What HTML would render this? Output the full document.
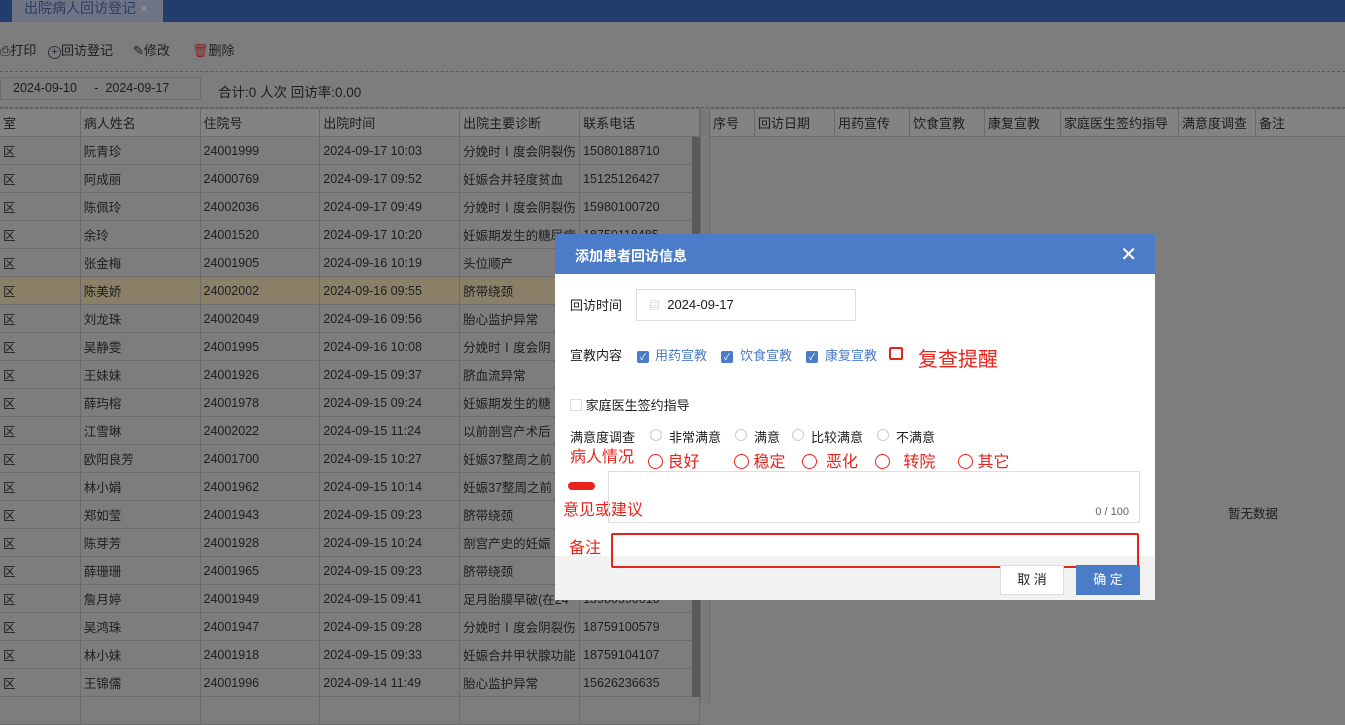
<!DOCTYPE html>
<html><head><meta charset="utf-8"><style>
*{margin:0;padding:0;box-sizing:border-box}
body{width:1345px;height:703px;overflow:hidden;background:#7d7d7d;font-family:"Liberation Sans","Noto Sans CJK SC",sans-serif;font-size:13px;color:#1e1e1e;position:relative}
.abs{position:absolute}
.top{left:0;top:0;width:1345px;height:22px;background:#213d6c}
.tab{left:12px;top:0;width:151px;height:22px;background:#6e7484;color:#2a3d66;font-size:14px;padding-left:12px;line-height:16px}
.tb{top:40px;font-size:13px}
.dash{left:0;width:1345px;border-top:1px dashed #5a5a5a}
table{border-collapse:collapse;position:absolute}
td{border:1px solid #6b6b6b;height:28px;padding-left:3px;white-space:nowrap;overflow:hidden;font-size:12.5px}
tr.h td{background:#838383;font-size:13px}
tr.sel td{background:#8a8068}
.modal{left:555px;top:234px;width:600px;height:366px;background:#fff}
.mh{height:40px;background:#4a7cc8;color:#fff;font-weight:bold;font-size:14px;padding:12px 0 0 20px}
.red{color:#e8231c}
.cb{display:inline-block;width:12px;height:12px;background:#4a7cc8;border-radius:2px;vertical-align:-1px;color:#fff;font-size:9px;line-height:12px;text-align:center}
.rad{position:absolute;top:2px;width:12px;height:12px;border:1px solid #ccc;border-radius:50%}
.rr{display:inline-block;width:15px;height:15px;border:1.5px solid #e8231c;border-radius:50%;vertical-align:-2px}
</style></head><body>
<div class="abs top"></div>
<div class="abs tab">出院病人回访登记 <span style="color:#999;font-weight:normal">×</span></div>
<div class="abs tb" style="left:0">⎙打印</div>
<div class="abs tb" style="left:48px"><span style="border:1px solid #334;border-radius:50%;display:inline-block;width:13px;height:13px;font-size:11px;line-height:11px;text-align:center">+</span>回访登记</div>
<div class="abs tb" style="left:133px">✎修改</div>
<div class="abs tb" style="left:192px"><span style="color:#8a1f1f">🗑</span>删除</div>
<div class="abs dash" style="top:71px"></div>
<div class="abs" style="left:0;top:77px;width:201px;height:23px;border:1px solid #6e6e6e"></div>
<div class="abs" style="left:13px;top:81px;font-size:12.5px">2024-09-10 &nbsp;&nbsp;&nbsp; - &nbsp;2024-09-17</div>
<div class="abs" style="left:218px;top:81px;font-size:13.5px">合计:0 人次 回访率:0.00</div>
<div class="abs dash" style="top:107px"></div>
<table style="left:-1px;top:108px;width:701px">
<colgroup><col width="81"><col width="120"><col width="120"><col width="140"><col width="120"><col width="120"></colgroup>
<tr class="h"><td>室</td><td>病人姓名</td><td>住院号</td><td>出院时间</td><td>出院主要诊断</td><td>联系电话</td></tr>
<tr><td>区</td><td>阮青珍</td><td>24001999</td><td>2024-09-17 10:03</td><td>分娩时Ⅰ度会阴裂伤</td><td>15080188710</td></tr>
<tr><td>区</td><td>阿成丽</td><td>24000769</td><td>2024-09-17 09:52</td><td>妊娠合并轻度贫血</td><td>15125126427</td></tr>
<tr><td>区</td><td>陈佩玲</td><td>24002036</td><td>2024-09-17 09:49</td><td>分娩时Ⅰ度会阴裂伤</td><td>15980100720</td></tr>
<tr><td>区</td><td>余玲</td><td>24001520</td><td>2024-09-17 10:20</td><td>妊娠期发生的糖尿病</td><td>18759118485</td></tr>
<tr><td>区</td><td>张金梅</td><td>24001905</td><td>2024-09-16 10:19</td><td>头位顺产</td><td></td></tr>
<tr class="sel"><td>区</td><td>陈美娇</td><td>24002002</td><td>2024-09-16 09:55</td><td>脐带绕颈</td><td></td></tr>
<tr><td>区</td><td>刘龙珠</td><td>24002049</td><td>2024-09-16 09:56</td><td>胎心监护异常</td><td></td></tr>
<tr><td>区</td><td>吴静雯</td><td>24001995</td><td>2024-09-16 10:08</td><td>分娩时Ⅰ度会阴</td><td></td></tr>
<tr><td>区</td><td>王妹妹</td><td>24001926</td><td>2024-09-15 09:37</td><td>脐血流异常</td><td></td></tr>
<tr><td>区</td><td>薛玙榕</td><td>24001978</td><td>2024-09-15 09:24</td><td>妊娠期发生的糖</td><td></td></tr>
<tr><td>区</td><td>江雪琳</td><td>24002022</td><td>2024-09-15 11:24</td><td>以前剖宫产术后</td><td></td></tr>
<tr><td>区</td><td>欧阳良芳</td><td>24001700</td><td>2024-09-15 10:27</td><td>妊娠37整周之前</td><td></td></tr>
<tr><td>区</td><td>林小娟</td><td>24001962</td><td>2024-09-15 10:14</td><td>妊娠37整周之前</td><td></td></tr>
<tr><td>区</td><td>郑如莹</td><td>24001943</td><td>2024-09-15 09:23</td><td>脐带绕颈</td><td></td></tr>
<tr><td>区</td><td>陈芽芳</td><td>24001928</td><td>2024-09-15 10:24</td><td>剖宫产史的妊娠</td><td></td></tr>
<tr><td>区</td><td>薛珊珊</td><td>24001965</td><td>2024-09-15 09:23</td><td>脐带绕颈</td><td></td></tr>
<tr><td>区</td><td>詹月婷</td><td>24001949</td><td>2024-09-15 09:41</td><td>足月胎膜早破(在24</td><td>15980590010</td></tr>
<tr><td>区</td><td>吴鸿珠</td><td>24001947</td><td>2024-09-15 09:28</td><td>分娩时Ⅰ度会阴裂伤</td><td>18759100579</td></tr>
<tr><td>区</td><td>林小妹</td><td>24001918</td><td>2024-09-15 09:33</td><td>妊娠合并甲状腺功能</td><td>18759104107</td></tr>
<tr><td>区</td><td>王锦儒</td><td>24001996</td><td>2024-09-14 11:49</td><td>胎心监护异常</td><td>15626236635</td></tr>
<tr><td></td><td></td><td></td><td></td><td></td><td></td></tr>
</table>
<div class="abs" style="left:692px;top:137px;width:8px;height:560px;background:#5a5a5a"></div>
<div class="abs" style="left:700px;top:108px;width:10px;height:595px;background:#7a7a7a;border-left:1px solid #6b6b6b;border-right:1px solid #6b6b6b"></div>
<table style="left:709px;top:108px;width:640px">
<colgroup><col width="45"><col width="80"><col width="75"><col width="75"><col width="76"><col width="118"><col width="77"><col></colgroup>
<tr class="h"><td>序号</td><td>回访日期</td><td>用药宣传</td><td>饮食宣教</td><td>康复宣教</td><td>家庭医生签约指导</td><td>满意度调查</td><td>备注</td></tr>
</table>
<div class="abs" style="left:1228px;top:503px;font-size:12.5px">暂无数据</div>

<div class="abs modal">
<div class="mh">添加患者回访信息<span style="position:absolute;right:18px;top:8px;font-size:20px;font-weight:normal">✕</span></div>
<div class="abs" style="left:15px;top:61px">回访时间</div>
<div class="abs" style="left:81px;top:55px;width:220px;height:32px;border:1px solid #ddd;padding:7px 0 0 12px"><span style="color:#bbb;font-size:11px">▤</span>&nbsp; 2024-09-17</div>
<div class="abs" style="left:15px;top:111px">宣教内容</div>
<div class="abs" style="left:82px;top:113px"><span class="cb">✓</span></div>
<div class="abs" style="left:100px;top:111px;color:#4a7cc8">用药宣教</div>
<div class="abs" style="left:166px;top:113px"><span class="cb">✓</span></div>
<div class="abs" style="left:185px;top:111px;color:#4a7cc8">饮食宣教</div>
<div class="abs" style="left:251px;top:113px"><span class="cb">✓</span></div>
<div class="abs" style="left:270px;top:111px;color:#4a7cc8">康复宣教</div>
<div class="abs" style="left:334px;top:113px;width:14px;height:13px;border:2.5px solid #e8231c;border-radius:2px"></div>
<div class="abs red" style="left:363px;top:109px;font-size:20px">复查提醒</div>
<div class="abs" style="left:15px;top:161px"><span style="display:inline-block;width:12px;height:12px;border:1px solid #ddd;vertical-align:-1px"></span> 家庭医生签约指导</div>
<div class="abs" style="left:15px;top:193px;width:580px;height:18px">满意度调查
<span class="rad" style="left:80px"></span><span class="abs" style="left:99px">非常满意</span>
<span class="rad" style="left:165px"></span><span class="abs" style="left:184px">满意</span>
<span class="rad" style="left:222px"></span><span class="abs" style="left:241px">比较满意</span>
<span class="rad" style="left:307px"></span><span class="abs" style="left:326px">不满意</span></div>
<div class="abs red" style="left:15px;top:209px;font-size:16px">病人情况</div>
<div class="abs red" style="left:93px;top:214px;font-size:16px"><span class="rr"></span> 良好</div>
<div class="abs red" style="left:179px;top:214px;font-size:16px"><span class="rr"></span> 稳定</div>
<div class="abs red" style="left:247px;top:214px;font-size:16px"><span class="rr"></span> &nbsp;恶化</div>
<div class="abs red" style="left:320px;top:214px;font-size:16px"><span class="rr"></span> &nbsp;&nbsp;转院</div>
<div class="abs red" style="left:403px;top:214px;font-size:16px"><span class="rr"></span> 其它</div>
<div class="abs" style="left:13px;top:248px;width:27px;height:8px;background:#e8231c;border-radius:4px"></div>
<div class="abs red" style="left:8px;top:262px;font-size:16px">意见或建议</div>
<div class="abs" style="left:53px;top:237px;width:532px;height:52px;border:1px solid #ddd"><span style="position:absolute;right:10px;bottom:4px;font-size:11px;color:#666">0 / 100</span></div>
<div class="abs" style="left:0;top:322px;width:600px;height:44px;background:#f2f2f2"></div>
<div class="abs red" style="left:14px;top:300px;font-size:16px">备注</div>
<div class="abs" style="left:56px;top:299px;width:528px;height:35px;border:2.5px solid #e8231c;border-radius:2px"></div>
<div class="abs" style="left:445px;top:331px;width:64px;height:30px;border:1px solid #ddd;background:#fff;text-align:center;line-height:28px">取 消</div>
<div class="abs" style="left:521px;top:331px;width:64px;height:30px;background:#4a7cc8;color:#fff;text-align:center;line-height:30px">确 定</div>
</div>
</body></html>
